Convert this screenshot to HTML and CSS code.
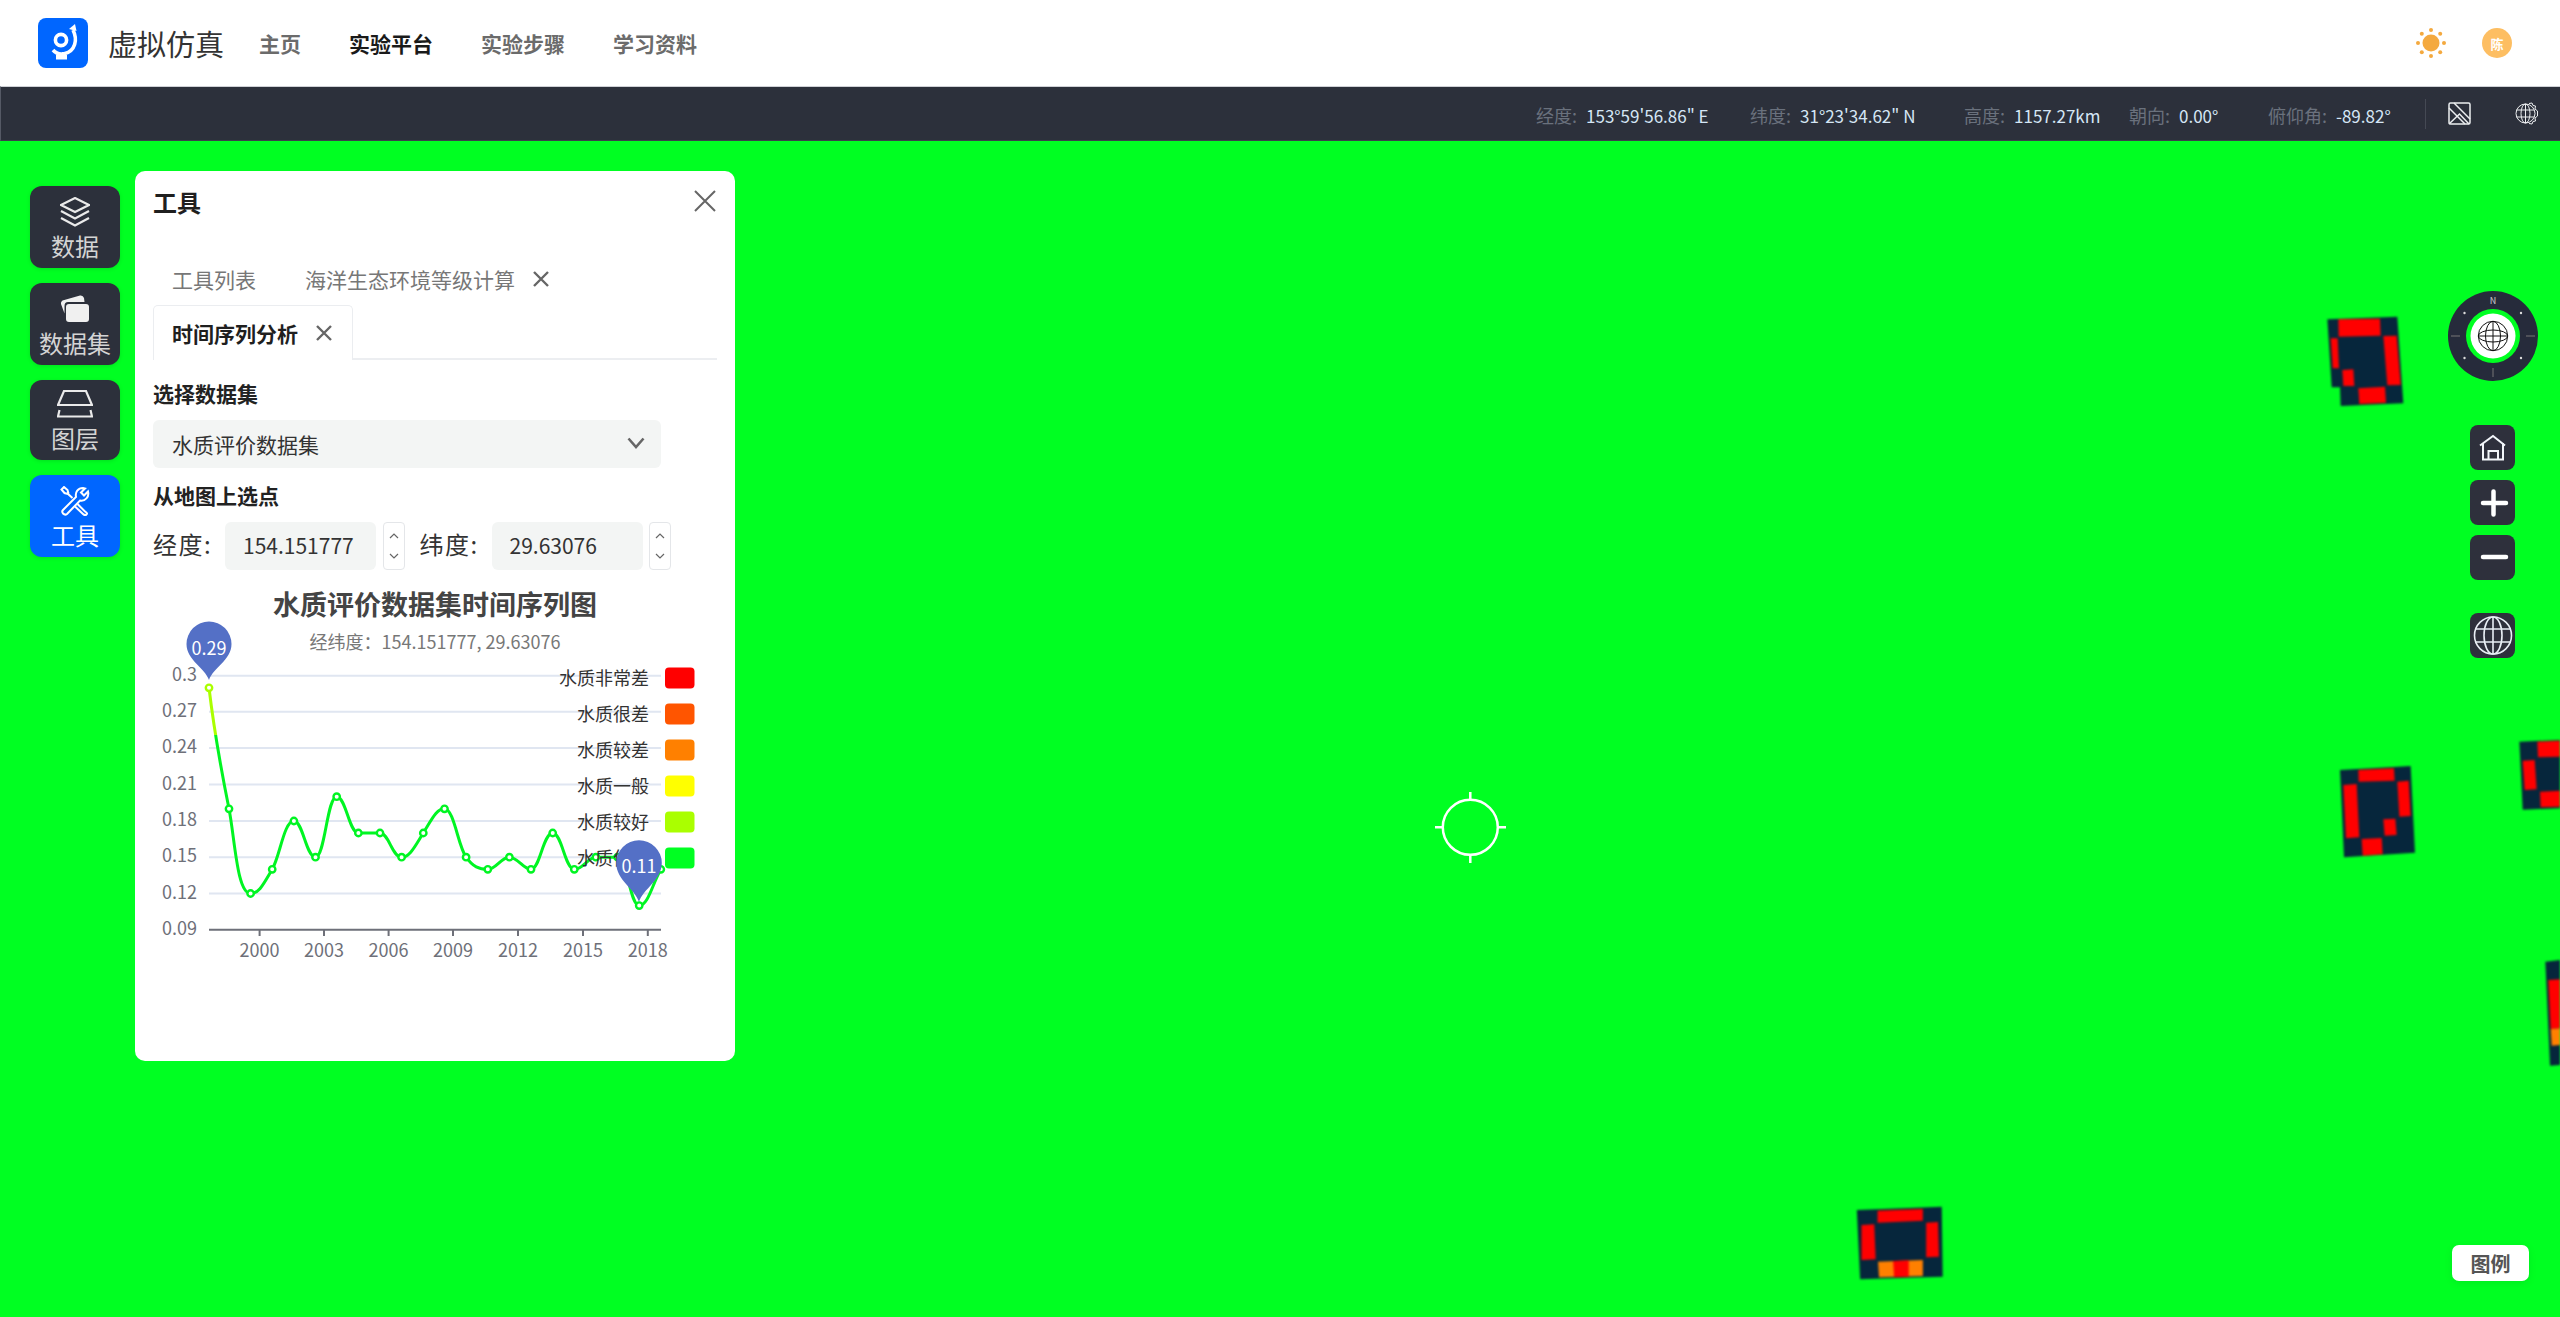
FILE: index.html
```html
<!DOCTYPE html>
<html lang="zh-CN">
<head>
<meta charset="utf-8">
<title>虚拟仿真</title>
<link rel="stylesheet" href="styles.css">
</head>
<body>
<header class="topbar">
  <div class="logo">
    <svg viewBox="0 0 50 50" width="50" height="50" class="logo-svg">
      <circle cx="23" cy="22" r="5.6" class="logo-line"/>
      <path d="M35 12C40 22 37 33 27 35.500C22 37 18 35.500 15 32" class="logo-line"/>
      <path d="M31 11L37 6L38.500 13Z" class="logo-fill"/>
      <rect x="24" y="34" width="4" height="4" class="logo-fill"/>
      <rect x="18" y="37" width="11" height="4.500" class="logo-fill"/>
    </svg>
  </div>
  <div class="brand">虚拟仿真</div>
  <nav class="nav">
    <a class="nav-item">主页</a>
    <a class="nav-item active">实验平台</a>
    <a class="nav-item">实验步骤</a>
    <a class="nav-item">学习资料</a>
  </nav>
  <div class="top-right">
    <svg viewBox="0 0 30 30" width="30" height="30" class="sun">
      <circle cx="15" cy="15" r="8.500"/>
      <circle cx="15" cy="2" r="2"/><circle cx="15" cy="28" r="2"/>
      <circle cx="2" cy="15" r="2"/><circle cx="28" cy="15" r="2"/>
      <circle cx="5.800" cy="5.800" r="2"/><circle cx="24.200" cy="5.800" r="2"/>
      <circle cx="5.800" cy="24.200" r="2"/><circle cx="24.200" cy="24.200" r="2"/>
    </svg>
    <div class="avatar">陈</div>
  </div>
</header>

<div class="statusbar">
  <div class="coord w214"><span class="k">经度:</span><span class="v">153°59'56.86" E</span></div>
  <div class="coord w214"><span class="k">纬度:</span><span class="v">31°23'34.62" N</span></div>
  <div class="coord w165"><span class="k">高度:</span><span class="v">1157.27km</span></div>
  <div class="coord w139"><span class="k">朝向:</span><span class="v">0.00°</span></div>
  <div class="coord w157"><span class="k">俯仰角:</span><span class="v">-89.82°</span></div>
  <div class="status-icons">
    <svg viewBox="0 0 23 23" width="23" height="23" class="st-icon">
      <rect x="1" y="1" width="21" height="21" rx="1.500"/>
      <path d="M6 1L22 17M1 6L17 22M1 22L11.500 12L21 22"/>
    </svg>
    <svg viewBox="0 0 23 23" width="23" height="23" class="st-icon thin">
      <circle cx="10.500" cy="11.500" r="9.500"/>
      <ellipse cx="10.500" cy="11.500" rx="4.500" ry="9.500"/>
      <path d="M10.500 2V21M1.500 8H19M1.500 15H19"/>
      <path d="M14 1.500L17 1L18 3.500L20.500 4L20 7L22.500 9V14L20 16L20.500 19L18 19.500L17 22L14 21.500"/>
    </svg>
  </div>
</div>

<main class="map">
  <svg class="tiles" viewBox="0 141 2560 1176" width="2560" height="1176">
    <g transform="translate(2300 280) scale(.33333)" class="tile">
      <polygon class="d" points="82,118 292,110 310,370 122,378 120,322 95,322"/>
      <polygon class="r" points="115,118 240,116 242,167 116,170"/>
      <polygon class="r" points="250,168 290,167 302,315 262,316"/>
      <polygon class="r" points="92,175 113,175 117,265 98,265"/>
      <polygon class="r" points="127,270 160,268 163,318 130,318"/>
      <polygon class="r" points="175,325 255,320 258,368 178,372"/>
    </g>
    <g transform="translate(2300 740) scale(.33333)" class="tile">
      <polygon class="d" points="120,90 332,78 345,338 132,352"/>
      <polygon class="r" points="175,90 282,85 284,122 176,125"/>
      <polygon class="r" points="130,135 170,132 178,292 138,295"/>
      <polygon class="r" points="292,125 326,122 332,228 298,230"/>
      <polygon class="r" points="250,238 286,236 290,285 254,287"/>
      <polygon class="r" points="185,297 245,294 248,343 188,347"/>
      <polygon class="d" points="658,5 780,0 780,205 668,209"/>
      <polygon class="r" points="712,5 780,2 780,50 714,52"/>
      <polygon class="r" points="668,62 704,60 710,148 674,150"/>
      <polygon class="r" points="720,155 780,152 780,200 722,202"/>
      <polygon class="d" points="736,665 780,660 780,975 750,977"/>
      <polygon class="r" points="745,720 780,718 780,865 752,867"/>
      <polygon class="o" points="752,867 780,865 780,915 755,917"/>
    </g>
    <g transform="translate(1820 1180) scale(.47191 .33333)" class="tile">
      <polygon class="d" points="78,90 258,80 260,290 85,298"/>
      <polygon class="r" points="122,92 218,87 218,122 122,128"/>
      <polygon class="r" points="88,135 115,133 118,238 88,240"/>
      <polygon class="r" points="225,128 250,126 252,230 225,232"/>
      <polygon class="o" points="123,245 218,240 218,288 125,292"/>
      <polygon class="r" points="155,243 188,241 188,290 157,292"/>
    </g>
    <g class="crosshair">
      <circle cx="1470.300" cy="827.300" r="27.500"/>
      <path d="M1470.300 792V800M1470.300 855V863M1435 827.300H1443M1498 827.300H1506"/>
    </g>
  </svg>

  <div class="tool-rail">
    <button class="rail-btn">
      <svg viewBox="0 0 30 30" width="30" height="30" class="rail-icon line"><path d="M15 1L29 8L15 15L1 8Z"/><path d="M1 14L15 21.500L29 14"/><path d="M1 21L15 28.500L29 21"/></svg>
      <span>数据</span>
    </button>
    <button class="rail-btn">
      <svg viewBox="0 0 30 30" width="30" height="30" class="rail-icon fill"><rect x="6" y="10" width="23" height="18" rx="3"/><path d="M2.500 6.500L20 1.500Q23 1 24 4L24.500 8H8Q4.500 8 4.500 12V19.500L1 10Q0.500 7.500 2.500 6.500Z"/></svg>
      <span>数据集</span>
    </button>
    <button class="rail-btn short">
      <svg viewBox="0 0 36 30" width="36" height="30" class="rail-icon line"><path d="M7 2H29L35 16H1Z"/><path d="M2.500 21L1 27.500H35L33.500 21"/></svg>
      <span>图层</span>
    </button>
    <button class="rail-btn active">
      <svg viewBox="0 0 30 30" width="30" height="30" class="rail-icon white"><path d="M3 24L16 11C15 6 18 2 23 2L25 2.500L21 6.500L24 9.500L28 5.500C29.500 11 25 15.500 20 14.500L7 28Q5 29.500 3 27.500Q1.500 25.500 3 24Z"/><path d="M12.500 12L8 8L4.500 7L1.500 3.500L4 1L7.500 4L8.500 7.500M17.500 18L25 25.500Q28 27.500 26.500 28.500Q25 30 23 28L15 20.500"/></svg>
      <span>工具</span>
    </button>
  </div>

  <section class="panel">
    <div class="panel-head">
      <h2 class="panel-title">工具</h2>
      <svg viewBox="0 0 22 22" width="22" height="22" class="panel-close"><path d="M1 1L21 21M21 1L1 21"/></svg>
    </div>
    <div class="tabs">
      <div class="tab">工具列表</div>
      <div class="tab">海洋生态环境等级计算<svg viewBox="0 0 16 16" width="16" height="16" class="tab-x"><path d="M1 1L15 15M15 1L1 15"/></svg></div>
      <div class="tab current">时间序列分析<svg viewBox="0 0 16 16" width="16" height="16" class="tab-x"><path d="M1 1L15 15M15 1L1 15"/></svg></div>
    </div>
    <div class="field-label first">选择数据集</div>
    <div class="select">
      <span>水质评价数据集</span>
      <svg viewBox="0 0 18 12" width="18" height="12" class="select-arrow"><path d="M1.500 1.500L9 10L16.500 1.500"/></svg>
    </div>
    <div class="field-label">从地图上选点</div>
    <div class="coord-row">
      <span class="coord-label">经度:</span>
      <div class="num-input">154.151777</div>
      <div class="spinner">
        <svg viewBox="0 0 10 6" width="10" height="6"><path d="M1 5L5 1L9 5"/></svg>
        <svg viewBox="0 0 10 6" width="10" height="6"><path d="M1 1L5 5L9 1"/></svg>
      </div>
      <span class="coord-label second">纬度:</span>
      <div class="num-input">29.63076</div>
      <div class="spinner">
        <svg viewBox="0 0 10 6" width="10" height="6"><path d="M1 5L5 1L9 5"/></svg>
        <svg viewBox="0 0 10 6" width="10" height="6"><path d="M1 1L5 5L9 1"/></svg>
      </div>
    </div>
    <svg class="chart" viewBox="135 580 600 390" width="600" height="390">
      <defs>
        <linearGradient id="lineColor" gradientUnits="userSpaceOnUse" x1="0" y1="675" x2="0" y2="931">
          <stop offset="0" stop-color="#aaff00"/>
          <stop offset="0.236" stop-color="#aaff00"/>
          <stop offset="0.236" stop-color="#00f522"/>
          <stop offset="1" stop-color="#00f522"/>
        </linearGradient>
      </defs>
      <text x="435" y="615" class="c-title">水质评价数据集时间序列图</text>
      <text x="435" y="649" class="c-sub">经纬度：154.151777, 29.63076</text>
      <path class="grid" d="M209 675.700H661M209 711.700H661M209 748H661M209 784.500H661M209 821H661M209 857.200H661M209 893.500H661"/>
      <path class="axis" d="M209 929.800H661M259.600 930V936M324 930V936M388.600 930V936M453 930V936M518 930V936M583 930V936M647.800 930V936"/>
      <g class="y-labels">
        <text x="197" y="681">0.3</text><text x="197" y="717">0.27</text><text x="197" y="753">0.24</text><text x="197" y="790">0.21</text><text x="197" y="826">0.18</text><text x="197" y="862">0.15</text><text x="197" y="899">0.12</text><text x="197" y="935">0.09</text>
      </g>
      <g class="x-labels">
        <text x="259.600" y="957">2000</text><text x="324" y="957">2003</text><text x="388.600" y="957">2006</text><text x="453" y="957">2009</text><text x="518" y="957">2012</text><text x="583" y="957">2015</text><text x="647.800" y="957">2018</text>
      </g>
      <path class="series" d="M209 687.800C214 730 221 769 229 808.800C235 840 237 893.500 250.600 893.500C259 893.500 263 885 272.200 869.300C280 856 284 821 293.900 821C303 821 306 857.200 315.500 857.200C325 857.200 327 796.700 336.700 796.700C346 796.700 349 833 358.400 833C365 833 373 833 380 833C389 833 392 857.200 401.600 857.200C410 857.200 415 846 423.300 833C431 821 436 808.800 444.500 808.800C454 808.800 458 846 466.100 857.200C473 867 479 869.300 487.800 869.300C496 869.300 501 857.200 509.400 857.200C518 857.200 523 869.300 531 869.300C540 869.300 543 833 552.700 833C562 833 565 869.300 574.300 869.300C583 869.300 588 857.200 595.900 857.200C604 857.200 610 857.200 617.600 857.200C627 857.200 630 905.600 639.200 905.600C648 905.600 652 885 660.800 869.300"/>
      <g class="dots">
        <circle cx="209" cy="687.800" r="3.200" class="lime"/><circle cx="229" cy="808.800" r="3.200"/><circle cx="250.600" cy="893.500" r="3.200"/><circle cx="272.200" cy="869.300" r="3.200"/><circle cx="293.900" cy="821" r="3.200"/><circle cx="315.500" cy="857.200" r="3.200"/><circle cx="336.700" cy="796.700" r="3.200"/><circle cx="358.400" cy="833" r="3.200"/><circle cx="380" cy="833" r="3.200"/><circle cx="401.600" cy="857.200" r="3.200"/><circle cx="423.300" cy="833" r="3.200"/><circle cx="444.500" cy="808.800" r="3.200"/><circle cx="466.100" cy="857.200" r="3.200"/><circle cx="487.800" cy="869.300" r="3.200"/><circle cx="509.400" cy="857.200" r="3.200"/><circle cx="531" cy="869.300" r="3.200"/><circle cx="552.700" cy="833" r="3.200"/><circle cx="574.300" cy="869.300" r="3.200"/><circle cx="595.900" cy="857.200" r="3.200"/><circle cx="617.600" cy="857.200" r="3.200"/><circle cx="639.200" cy="905.600" r="3.200"/><circle cx="660.800" cy="869.300" r="3.200"/>
      </g>
      <g class="legend-text">
        <text x="649" y="684.500">水质非常差</text><text x="649" y="720.500">水质很差</text><text x="649" y="756.500">水质较差</text><text x="649" y="792.500">水质一般</text><text x="649" y="828.500">水质较好</text><text x="649" y="864.500">水质优秀</text>
      </g>
      <rect x="665" y="667.500" width="29.500" height="21" rx="4" fill="#ff0000"/>
      <rect x="665" y="703.500" width="29.500" height="21" rx="4" fill="#ff5500"/>
      <rect x="665" y="739.500" width="29.500" height="21" rx="4" fill="#ff8000"/>
      <rect x="665" y="775.500" width="29.500" height="21" rx="4" fill="#ffff00"/>
      <rect x="665" y="811.500" width="29.500" height="21" rx="4" fill="#aaff00"/>
      <rect x="665" y="847.500" width="29.500" height="21" rx="4" fill="#00ff22"/>
      <path class="pin" d="M209 680C205 668 186.500 660 186.500 644A22.500 22.500 0 1 1 231.500 644C231.500 660 213 668 209 680Z"/>
      <path class="pin" d="M639 902C635 889 616.200 880 616.200 863A22.800 22.800 0 1 1 661.800 863C661.800 880 643 889 639 902Z"/>
      <text x="209" y="654.500" class="pin-text">0.29</text>
      <text x="639" y="872.500" class="pin-text">0.11</text>
    </svg>
  </section>

  <div class="compass">
    <svg viewBox="0 0 90 90" width="90" height="90">
      <circle cx="45" cy="45" r="45" class="cp-bg"/>
      <circle cx="45" cy="45" r="27" class="cp-ring"/>
      <circle cx="45" cy="45" r="22.500" class="cp-core"/>
      <g class="cp-globe">
        <circle cx="45" cy="45" r="14.700"/>
        <ellipse cx="45" cy="45" rx="7.500" ry="14.700"/>
        <ellipse cx="45" cy="45" rx="14.700" ry="6"/>
        <path d="M30.500 45H59.500M45 30.500V59.500"/>
      </g>
      <path class="cp-tick" d="M3 45H12M78 45H87M45 77V86"/>
      <circle cx="16.500" cy="22" r="1.200" class="cp-dot"/><circle cx="73" cy="22" r="1.200" class="cp-dot"/><circle cx="16.500" cy="67" r="1.200" class="cp-dot"/><circle cx="73" cy="67" r="1.200" class="cp-dot"/>
      <text x="45" y="13" class="cp-n">N</text>
    </svg>
  </div>

  <div class="map-controls">
    <button class="ctl"><svg viewBox="0 0 45 45" width="45" height="45" class="ctl-line"><path d="M10 20.500L23 11L35 20.500"/><path d="M13 18V34.500H33V18"/><path d="M18.500 34.500V26H28V34.500"/></svg></button>
    <button class="ctl"><svg viewBox="0 0 45 45" width="45" height="45" class="ctl-bold"><path d="M13 23H36M23.500 11.500V34.500"/></svg></button>
    <button class="ctl"><svg viewBox="0 0 45 45" width="45" height="45" class="ctl-bold"><path d="M13 22H36"/></svg></button>
    <button class="ctl globe"><svg viewBox="0 0 45 45" width="45" height="45" class="ctl-thin"><circle cx="23" cy="22.500" r="18.500"/><ellipse cx="23" cy="22.500" rx="9" ry="18.500"/><path d="M23 4V41M5 16H41M5 29H41"/></svg></button>
  </div>

  <button class="legend-btn">图例</button>
</main>
</body>
</html>
```

FILE: styles.css
```css
* { box-sizing: border-box; }
html, body { margin: 0; padding: 0; }
body {
  width: 2560px;
  height: 1317px;
  overflow: hidden;
  display: flex;
  flex-direction: column;
  font-family: "Noto Sans CJK SC", "Noto Sans", sans-serif;
  background: #fff;
}
button { font-family: inherit; border: 0; padding: 0; cursor: pointer; }

.topbar {
  height: 86px;
  flex: none;
  display: flex;
  align-items: center;
  padding: 0 48px 0 38px;
  background: #fff;
}
.logo { width: 50px; height: 50px; background: #0066ff; border-radius: 8px; }
.logo-svg { display: block; }
.logo-line { fill: none; stroke: #fff; stroke-width: 3.600; }
.logo-fill { fill: #fff; }
.brand { margin-left: 20px; font-size: 29px; color: #333; line-height: 40px; }
.nav { display: flex; gap: 48px; margin-left: 35px; }
.nav-item { font-size: 21px; font-weight: 700; color: #6b6b6b; line-height: 30px; }
.nav-item.active { color: #1a1a1a; }
.top-right { margin-left: auto; display: flex; align-items: center; gap: 36px; }
.sun { fill: #f4a93f; display: block; }
.avatar {
  width: 30px; height: 30px; border-radius: 50%;
  background: #fdbe62; color: #fff;
  font-size: 13px; font-weight: 700;
  display: flex; align-items: center; justify-content: center;
}

.statusbar {
  height: 55px;
  flex: none;
  display: flex;
  align-items: center;
  justify-content: flex-end;
  background: #2c303b;
  border-top: 1px solid #cfd1d6;
  border-left: 1px solid #555965;
  border-bottom: 1px solid #3c404b;
  font-size: 17px;
}
.coord { display: flex; gap: 9px; padding-top: 3px; white-space: nowrap; align-items: baseline; }
.w214 { width: 214px; }
.w165 { width: 165px; }
.w139 { width: 139px; }
.w157 { width: 157px; }
.k { color: #6a717d; font-size: 18px; }
.v { color: #d5e6f5; }
.status-icons {
  display: flex; gap: 44px; align-items: center;
  height: 30px; padding: 0 22px;
  border-left: 1px solid #454954;
}
.st-icon { display: block; fill: none; stroke: #eceef0; stroke-width: 1.500; }
.st-icon.thin { stroke-width: 1; }

.map { position: relative; flex: 1; background: #00ff22; overflow: hidden; }
.tiles { position: absolute; left: 0; top: 0; display: block; }
.tile { filter: blur(2.500px); }
.tile .d { fill: #06263c; }
.tile .r { fill: #ff0000; }
.tile .o { fill: #ff8000; }
.crosshair { fill: none; stroke: #fff; stroke-width: 2.500; }

.tool-rail {
  position: absolute; left: 30px; top: 45px;
  display: flex; flex-direction: column; gap: 15px;
}
.rail-btn {
  width: 90px; height: 82px;
  padding-top: 11px;
  background: #2c303b;
  border-radius: 12px;
  color: #d4d4d4;
  font-size: 24px;
  display: flex; flex-direction: column; align-items: center;
  box-shadow: 0 1px 4px rgba(0, 0, 0, .12);
}
.rail-btn span { line-height: 36px; margin-top: 1px; }
.rail-btn.short { height: 80px; padding-top: 9px; }
.rail-btn.active { background: #0066ff; color: #fff; }
.rail-icon { display: block; flex: none; }
.rail-icon.line { fill: none; stroke: #eaeaea; stroke-width: 2.200; }
.rail-icon.fill { fill: #f0f0f0; }
.rail-icon.white { fill: none; stroke: #fff; stroke-width: 2; }

.panel {
  position: absolute; left: 135px; top: 30px;
  width: 600px; height: 890px;
  padding: 0 18px;
  background: #fff;
  border-radius: 10px;
}
.panel-head { display: flex; justify-content: space-between; align-items: flex-start; height: 80px; }
.panel-title { margin: 13px 0 0; font-size: 24px; line-height: 36px; font-weight: 700; color: #1f1f1f; }
.panel-close { margin: 19px 1px 0 0; fill: none; stroke: #666; stroke-width: 2; }
.tabs { display: flex; flex-wrap: wrap; border-bottom: 2px solid #eceef1; height: 109px; }
.tab {
  height: 54px;
  padding: 0 18px;
  margin-right: 11px;
  display: flex; align-items: center;
  font-size: 21px; color: #777;
  border: 1px solid transparent;
  border-bottom: 0;
  white-space: nowrap;
}
.tab.current {
  height: 55px;
  margin-right: 0;
  padding: 0 20px 0 18px;
  background: #fff;
  font-weight: 700;
  color: #1f1f1f;
  border-color: #ebedf0;
  border-radius: 5px 5px 0 0;
}
.tab-x { margin-left: 18px; fill: none; stroke: #666; stroke-width: 2.400; }
.field-label { font-size: 21px; line-height: 30px; font-weight: 700; color: #222; margin-bottom: 12px; }
.field-label.first { margin-top: 18px; }
.select {
  width: 508px; height: 48px;
  padding: 0 16px 0 19px;
  margin-bottom: 12px;
  display: flex; align-items: center; justify-content: space-between;
  background: #f3f5f4; border-radius: 6px;
  font-size: 21px; color: #333;
}
.select span { margin-top: -1px; }
.select-arrow { fill: none; stroke: #666; stroke-width: 2.600; margin-top: -3px; }
.coord-row { display: flex; align-items: center; height: 48px; margin-bottom: 10px; }
.coord-label { width: 58px; font-size: 24px; line-height: 34px; margin-top: -5px; color: #333; white-space: nowrap; letter-spacing: 1.500px; }
.coord-label.second { margin-left: 15px; }
.num-input {
  width: 151px; height: 48px;
  margin-left: 14px;
  padding: 0 0 3px 18px;
  display: flex; align-items: center;
  background: #f3f5f4; border-radius: 6px;
  font-size: 21px; color: #333;
}
.spinner {
  width: 22px; height: 48px;
  margin-left: 6.500px;
  display: flex; flex-direction: column; align-items: center; justify-content: space-between;
  padding: 10px 0;
  background: #fff;
  border: 1px solid #e4e6e9; border-radius: 4px;
}
.spinner svg { display: block; fill: none; stroke: #666; stroke-width: 1.200; }

.chart { display: block; margin-left: -18px; }
.chart text { font-family: "Noto Sans CJK SC", "Noto Sans", sans-serif; }
.c-title { font-size: 27px; font-weight: 700; fill: #444; text-anchor: middle; }
.c-sub { font-size: 18px; fill: #777; text-anchor: middle; }
.grid { fill: none; stroke: #e0e6f1; stroke-width: 2; }
.axis { fill: none; stroke: #6e7079; stroke-width: 2; }
.y-labels text { font-size: 18px; fill: #6e7079; text-anchor: end; }
.x-labels text { font-size: 18px; fill: #6e7079; text-anchor: middle; }
.series { fill: none; stroke: url(#lineColor); stroke-width: 3; }
.dots circle { fill: #fff; stroke: #00f522; stroke-width: 2.400; }
.dots circle.lime { stroke: #aaff00; }
.legend-text text { font-size: 18px; fill: #333; text-anchor: end; }
.pin { fill: #5470c6; }
.pin-text { font-size: 18px; fill: #fff; text-anchor: middle; }

.compass { position: absolute; left: 2448px; top: 150px; width: 90px; height: 90px; }
.compass svg { display: block; }
.cp-bg { fill: #262b3b; }
.cp-ring { fill: #00ff22; }
.cp-core { fill: #fff; }
.cp-globe { fill: none; stroke: #111; stroke-width: 1; }
.cp-tick { fill: none; stroke: #777; stroke-width: 1; }
.cp-dot { fill: #ddd; }
.cp-n { font-size: 9px; fill: #ccc; text-anchor: middle; }

.map-controls {
  position: absolute; left: 2470px; top: 284px;
  display: flex; flex-direction: column; gap: 10px;
}
.ctl { width: 45px; height: 45px; background: #2e303c; border-radius: 8px; display: block; }
.ctl svg { display: block; }
.ctl.globe { margin-top: 23px; }
.ctl-line { fill: none; stroke: #f2f6fa; stroke-width: 2; }
.ctl-bold { fill: none; stroke: #fff; stroke-width: 4.500; stroke-linecap: round; }
.ctl-thin { fill: none; stroke: #e8eef5; stroke-width: 1.600; }

.legend-btn {
  position: absolute; left: 2452px; top: 1104px;
  width: 77px; height: 36px;
  background: #fff;
  border-radius: 7px;
  font-size: 20px; font-weight: 700; color: #555;
  box-shadow: 0 2px 8px rgba(0, 0, 0, .08);
}
```
